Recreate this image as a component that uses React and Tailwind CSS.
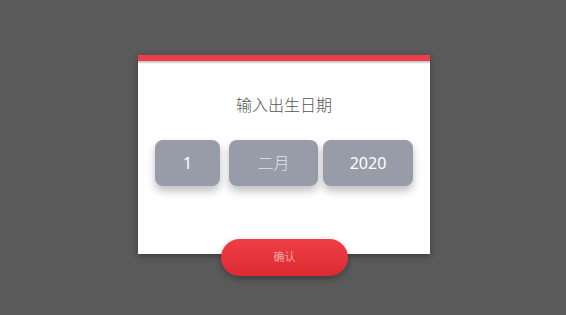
import React from 'react';

const Box = ({ children, w, dim }) => (
  <div
    className={`${w} h-[46px] rounded-[8px] bg-[#989ca8] flex items-center justify-center text-[16px] shadow-[0_5px_8px_rgba(0,0,0,0.25)] ${
      dim ? 'text-[#e2e4ea] font-light' : 'text-white'
    }`}
  >
    {children}
  </div>
);

export default function App() {
  return (
    <div
      className="w-[566px] h-[315px] bg-[#5a5a5a] relative overflow-hidden"
      style={{ fontFamily: '"Noto Sans", "Noto Sans CJK SC", sans-serif' }}
    >
      <div className="absolute left-[138px] top-[55px] w-[292px] h-[199px] bg-white shadow-[0_2px_6px_rgba(0,0,0,0.35)] flex flex-col">
        <div className="h-[6px] bg-[#ee3d48]" />
        <div className="h-[3px] bg-gradient-to-b from-[#b9b9b9] to-white" />
        <div className="text-center text-[16px] font-light text-[#555] mt-[30px] leading-[22px]">
          输入出生日期
        </div>
        <div className="flex ml-[17px] mt-[24px]">
          <Box w="w-[65px]">1</Box>
          <div className="w-[9px]" />
          <Box w="w-[89px]" dim>二月</Box>
          <div className="w-[5px]" />
          <Box w="w-[90px]">2020</Box>
        </div>
      </div>
      <button className="absolute left-[221px] top-[239px] w-[127px] h-[37px] rounded-full bg-gradient-to-b from-[#ef3d45] to-[#dc2a32] text-[11px] text-[#f7a6ab] shadow-[0_3px_6px_rgba(0,0,0,0.3)]">
        确认
      </button>
    </div>
  );
}
